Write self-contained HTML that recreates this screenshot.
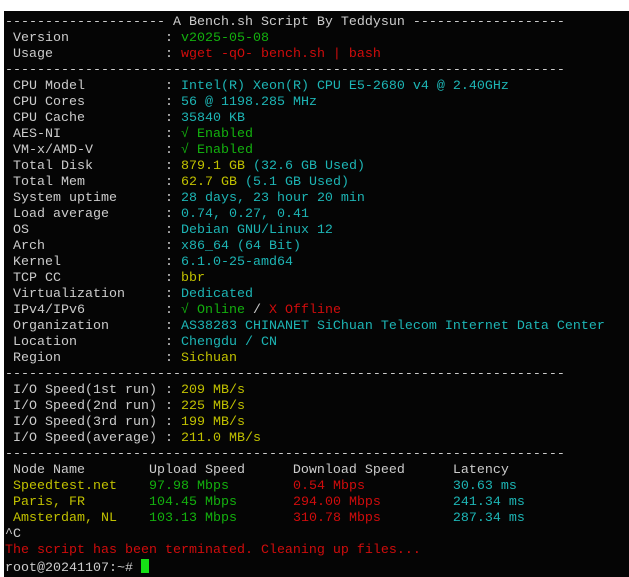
<!DOCTYPE html>
<html><head><meta charset="utf-8"><style>
html,body{margin:0;padding:0;background:#fff;width:629px;height:577px;overflow:hidden}
#t{position:absolute;left:4px;top:11px;width:625px;height:566px;background:#050505}
pre{position:absolute;left:5px;top:15px;margin:0;font-family:"Liberation Mono",monospace;font-size:13.33px;line-height:16px;color:#cccccc;white-space:pre}
.g{color:#13b00e}.r{color:#d00c0c}.c{color:#1db5b5}.y{color:#c1c100}
.cur{display:inline-block;width:8px;height:14px;background:#16e016;vertical-align:-2px}
</style></head><body><div id="t"></div>
<pre>-------------------- A Bench.sh Script By Teddysun -------------------
 Version            : <span class="g">v2025-05-08</span>
 Usage              : <span class="r">wget -qO- bench.sh | bash</span>
----------------------------------------------------------------------
 CPU Model          : <span class="c">Intel(R) Xeon(R) CPU E5-2680 v4 @ 2.40GHz</span>
 CPU Cores          : <span class="c">56 @ 1198.285 MHz</span>
 CPU Cache          : <span class="c">35840 KB</span>
 AES-NI             : <span class="g">√ Enabled</span>
 VM-x/AMD-V         : <span class="g">√ Enabled</span>
 Total Disk         : <span class="y">879.1 GB</span> <span class="c">(32.6 GB Used)</span>
 Total Mem          : <span class="y">62.7 GB</span> <span class="c">(5.1 GB Used)</span>
 System uptime      : <span class="c">28 days, 23 hour 20 min</span>
 Load average       : <span class="c">0.74, 0.27, 0.41</span>
 OS                 : <span class="c">Debian GNU/Linux 12</span>
 Arch               : <span class="c">x86_64 (64 Bit)</span>
 Kernel             : <span class="c">6.1.0-25-amd64</span>
 TCP CC             : <span class="y">bbr</span>
 Virtualization     : <span class="c">Dedicated</span>
 IPv4/IPv6          : <span class="g">√ Online</span> / <span class="r">X Offline</span>
 Organization       : <span class="c">AS38283 CHINANET SiChuan Telecom Internet Data Center</span>
 Location           : <span class="c">Chengdu / CN</span>
 Region             : <span class="y">Sichuan</span>
----------------------------------------------------------------------
 I/O Speed(1st run) : <span class="y">209 MB/s</span>
 I/O Speed(2nd run) : <span class="y">225 MB/s</span>
 I/O Speed(3rd run) : <span class="y">199 MB/s</span>
 I/O Speed(average) : <span class="y">211.0 MB/s</span>
----------------------------------------------------------------------
 Node Name        Upload Speed      Download Speed      Latency
 <span class="y">Speedtest.net    </span><span class="g">97.98 Mbps        </span><span class="r">0.54 Mbps           </span><span class="c">30.63 ms</span>
 <span class="y">Paris, FR        </span><span class="g">104.45 Mbps       </span><span class="r">294.00 Mbps         </span><span class="c">241.34 ms</span>
 <span class="y">Amsterdam, NL    </span><span class="g">103.13 Mbps       </span><span class="r">310.78 Mbps         </span><span class="c">287.34 ms</span>
^C
<span class="r">The script has been terminated. Cleaning up files...</span>
root@20241107:~# <span class="cur"></span></pre>
</body></html>
